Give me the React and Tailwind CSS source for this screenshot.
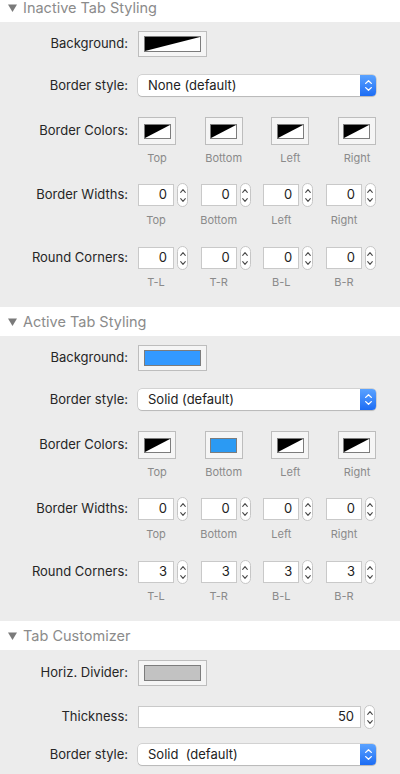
import React from 'react';

const POSITIONS = ['Top', 'Bottom', 'Left', 'Right'];
const CORNERS = ['T-L', 'T-R', 'B-L', 'B-R'];

function Caret() {
    return (
        <svg width="9" height="8" viewBox="0 0 9 8" className="shrink-0">
            <path d="M0 0.5h9L4.5 8z" fill="#7a7a7a" />
        </svg>
    );
}

function SectionHeader({ title, className = '' }) {
    return (
        <div className={`flex h-[29px] items-center gap-[6px] bg-white pl-[8px] ${className}`}>
            <Caret />
            <span className="text-[14.5px] text-[#8b8b8b]">{title}</span>
        </div>
    );
}

function Row({ label, className = '', children }) {
    return (
        <div className={`flex items-center ${className}`}>
            <div className="w-[128px] shrink-0 text-right text-[13px] text-[#262626]">{label}</div>
            <div className="ml-[10px] w-[238px]">{children}</div>
        </div>
    );
}

// black / white split used when no colour is set
function Mixed() {
    return (
        <svg width="100%" height="100%" viewBox="0 0 100 100" preserveAspectRatio="none" className="block">
            <rect width="100" height="100" fill="#fff" />
            <polygon points="0,0 100,0 0,100" fill="#000" />
        </svg>
    );
}

function Well({ big = false, color }) {
    const outer = big
        ? 'flex h-[26px] w-[69px] items-center justify-center border border-[#bdbdbd] bg-[#f5f5f5]'
        : 'flex h-[28px] w-[38px] items-center justify-center border border-[#bdbdbd] bg-[#f5f5f5]';
    const inner = big
        ? 'h-[16px] w-[57px] border border-[#7c7c7c] overflow-hidden'
        : 'h-[15px] w-[27px] border border-[#7c7c7c] overflow-hidden';
    return (
        <div className={outer}>
            <div className={inner} style={color ? { background: color } : undefined}>
                {!color && <Mixed />}
            </div>
        </div>
    );
}

function Chevron({ up, color, w = 6, h = 4, sw = 1.1 }) {
    const d = up ? `M0.7 ${h - 0.6}L${w / 2} 0.7L${w - 0.7} ${h - 0.6}` : `M0.7 0.6L${w / 2} ${h - 0.7}L${w - 0.7} 0.6`;
    return (
        <svg width={w} height={h} viewBox={`0 0 ${w} ${h}`} className="block">
            <path d={d} fill="none" stroke={color} strokeWidth={sw} strokeLinecap="round" strokeLinejoin="round" />
        </svg>
    );
}

function Stepper() {
    return (
        <div className="flex h-[24px] w-[11px] shrink-0 flex-col items-center justify-center gap-[5px] rounded-full border border-[#c6c6c6] bg-white">
            <Chevron up color="#4a4a4a" w={6} h={4} />
            <Chevron color="#4a4a4a" w={6} h={4} />
        </div>
    );
}

function NumField({ value, wide = false }) {
    return (
        <div className="flex h-[22px] items-center gap-[3px]">
            <div
                className={`flex h-[22px] items-center justify-end border border-[#c9c9c9] bg-white pr-[6px] text-[13px] text-[#222] ${
                    wide ? 'w-[223px]' : 'w-[36px]'
                }`}
            >
                {value}
            </div>
            <Stepper />
        </div>
    );
}

function Select({ value }) {
    return (
        <div className="flex h-[21px] w-[238px] items-center rounded-[4px] bg-white shadow-[0_0_0_0.5px_rgba(0,0,0,0.22),0_1px_1px_rgba(0,0,0,0.12)]">
            <span className="flex-1 whitespace-pre pl-[10px] text-[13px] text-[#222]">{value}</span>
            <div className="flex h-full w-[16px] flex-col items-center justify-center gap-[3px] rounded-r-[4px] bg-linear-to-b from-[#5aa2ff] to-[#1c6cf4]">
                <Chevron up color="#fff" w={7} h={4} sw={1.3} />
                <Chevron color="#fff" w={7} h={4} sw={1.3} />
            </div>
        </div>
    );
}

function SubLabels({ items, width, className = '' }) {
    return (
        <div className={`ml-[138px] flex h-[14px] w-[238px] justify-between ${className}`}>
            {items.map((t) => (
                <div key={t} className={width === 'num' ? 'w-[50px]' : 'w-[38px]'}>
                    <div
                        className={`flex justify-center whitespace-nowrap text-[11px] leading-[14px] text-[#8a8a8a] ${
                            width === 'num' ? 'w-[36px]' : 'w-[38px]'
                        }`}
                    >
                        {t}
                    </div>
                </div>
            ))}
        </div>
    );
}

function TabStyling({ background, borderStyle, colors, corners }) {
    return (
        <div className="bg-[#ececec] pb-[18px] pt-[9px]">
            <Row label="Background:">
                <Well big color={background} />
            </Row>
            <Row label="Border style:" className="mt-[18px]">
                <Select value={borderStyle} />
            </Row>
            <Row label="Border Colors:" className="mt-[21px]">
                <div className="flex justify-between">
                    {colors.map((c, i) => (
                        <Well key={i} color={c} />
                    ))}
                </div>
            </Row>
            <SubLabels items={POSITIONS} className="mt-[6px]" />
            <Row label="Border Widths:" className="mt-[19px]">
                <div className="flex justify-between">
                    {POSITIONS.map((p) => (
                        <NumField key={p} value="0" />
                    ))}
                </div>
            </Row>
            <SubLabels items={POSITIONS} width="num" className="mt-[7px]" />
            <Row label="Round Corners:" className="mt-[20px]">
                <div className="flex justify-between">
                    {CORNERS.map((p) => (
                        <NumField key={p} value={corners} />
                    ))}
                </div>
            </Row>
            <SubLabels items={CORNERS} width="num" className="mt-[6px]" />
        </div>
    );
}

export default function App() {
    return (
        <div className="min-h-screen w-[400px] overflow-hidden bg-[#ececec] font-['Inter',sans-serif]">
            <SectionHeader title="Inactive Tab Styling" className="-mt-[7px]" />
            <TabStyling borderStyle="None (default)" colors={[null, null, null, null]} corners="0" />

            <SectionHeader title="Active Tab Styling" />
            <TabStyling
                background="#3399ff"
                borderStyle="Solid (default)"
                colors={[null, '#2b9af3', null, null]}
                corners="3"
            />

            <SectionHeader title="Tab Customizer" />
            <div className="bg-[#ececec] pb-[12px] pt-[10px]">
                <Row label="Horiz. Divider:">
                    <Well big color="#c2c2c2" />
                </Row>
                <Row label="Thickness:" className="mt-[20px]">
                    <NumField value="50" wide />
                </Row>
                <Row label="Border style:" className="mt-[16px]">
                    <Select value="Solid  (default)" />
                </Row>
            </div>
        </div>
    );
}
